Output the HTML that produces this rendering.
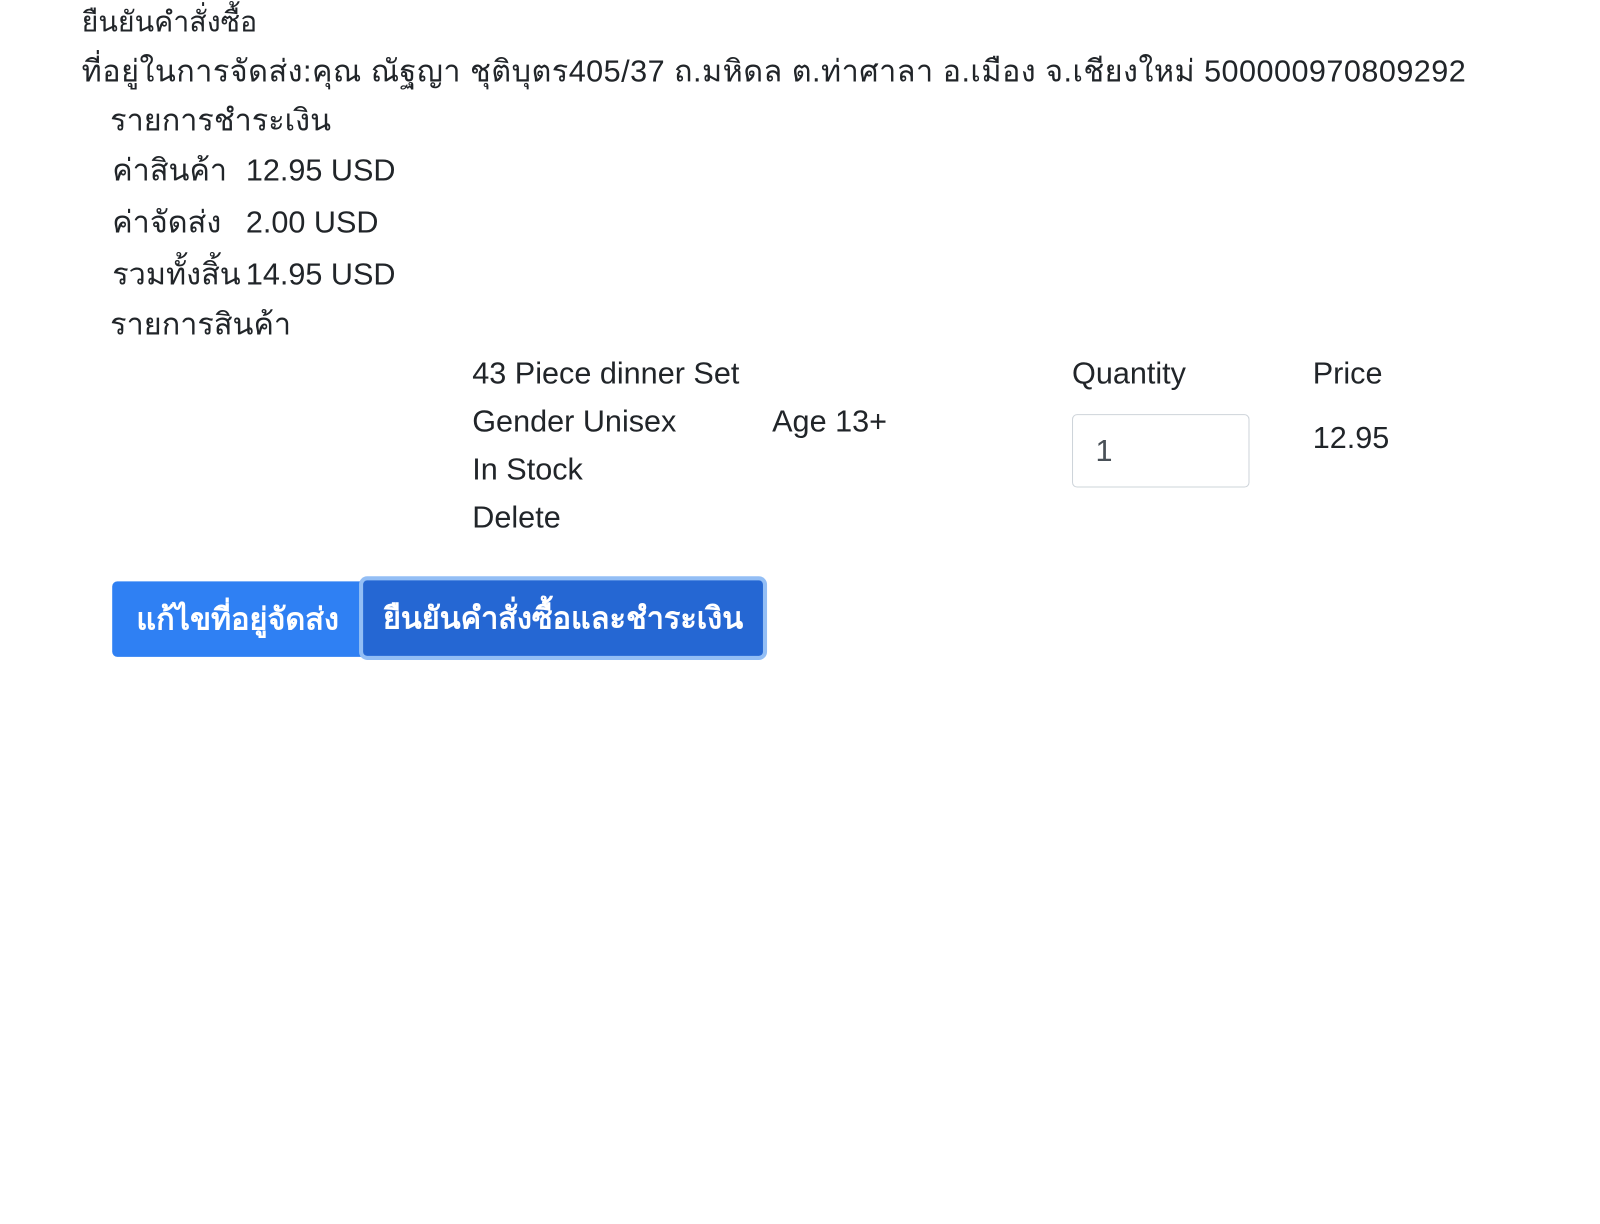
<!DOCTYPE html>
<html><head><meta charset="utf-8"><style>
body{margin:0;width:1600px;height:1200px;background:#fff;font-family:"Liberation Sans","Noto Sans CJK SC",sans-serif;color:#212529;font-size:30px;position:relative;overflow:hidden}
#w{position:absolute;left:0;top:0;width:1600px;height:1200px;transform:scale(1.02);transform-origin:0 0}
.a{position:absolute;white-space:nowrap;line-height:1}
.btn{position:absolute;color:#fff;font-size:30px;display:flex;align-items:center;justify-content:center;border-radius:5px;font-weight:bold}
</style></head><body><div id="w">
<div class="a" style="left:80px;top:8px;font-size:28px">ยืนยันคำสั่งซื้อ</div>
<div class="a" style="left:80px;top:56px;letter-spacing:0.45px">ที่อยู่ในการจัดส่ง:คุณ ณัฐญา ชุติบุตร405/37 ถ.มหิดล ต.ท่าศาลา อ.เมือง จ.เชียงใหม่ 500000970809292</div>
<div class="a" style="left:108px;top:104px">รายการชำระเงิน</div>
<div class="a" style="left:110px;top:153px">ค่าสินค้า</div><div class="a" style="left:241px;top:153px">12.95 USD</div>
<div class="a" style="left:110px;top:204px">ค่าจัดส่ง</div><div class="a" style="left:241px;top:204px">2.00 USD</div>
<div class="a" style="left:110px;top:255px">รวมทั้งสิ้น</div><div class="a" style="left:241px;top:255px">14.95 USD</div>
<div class="a" style="left:108px;top:304px">รายการสินค้า</div>
<div class="a" style="left:463px;top:352px">43 Piece dinner Set</div>
<div class="a" style="left:1051px;top:352px">Quantity</div>
<div class="a" style="left:1287px;top:352px">Price</div>
<div class="a" style="left:463px;top:399px">Gender Unisex</div>
<div class="a" style="left:757px;top:399px">Age 13+</div>
<div style="position:absolute;left:1051px;top:406px;width:174px;height:72px;border:1px solid #ced4da;border-radius:5px;box-sizing:border-box"></div>
<div class="a" style="left:1074px;top:428px;color:#495057">1</div>
<div class="a" style="left:1287px;top:415px">12.95</div>
<div class="a" style="left:463px;top:446px">In Stock</div>
<div class="a" style="left:463px;top:493px">Delete</div>
<div class="btn" style="left:110px;top:570px;width:246px;height:74px;background:#2f80f3;border-radius:5px 0 0 5px">แก้ไขที่อยู่จัดส่ง</div>
<div class="btn" style="left:356px;top:569px;width:392px;height:74px;background:#2567d3;box-shadow:0 0 0 4px #93bef5;border-radius:4px">ยืนยันคำสั่งซื้อและชำระเงิน</div>
</div></body></html>
